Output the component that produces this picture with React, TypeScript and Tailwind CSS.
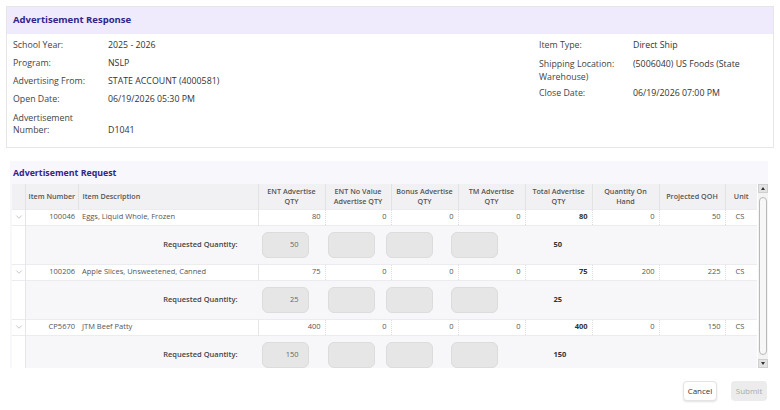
import { ChevronDown } from 'lucide-react';

type Item = {
    number: string;
    description: string;
    ent: number;
    entNoValue: number;
    bonus: number;
    tm: number;
    total: number;
    onHand: number;
    projected: number;
    unit: string;
    requested: number;
};

const items: Item[] = [
    { number: '100046', description: 'Eggs, Liquid Whole, Frozen', ent: 80, entNoValue: 0, bonus: 0, tm: 0, total: 80, onHand: 0, projected: 50, unit: 'CS', requested: 50 },
    { number: '100206', description: 'Apple Slices, Unsweetened, Canned', ent: 75, entNoValue: 0, bonus: 0, tm: 0, total: 75, onHand: 200, projected: 225, unit: 'CS', requested: 25 },
    { number: 'CP5670', description: 'JTM Beef Patty', ent: 400, entNoValue: 0, bonus: 0, tm: 0, total: 400, onHand: 0, projected: 150, unit: 'CS', requested: 150 },
];

const leftInfo: [string, string][] = [
    ['School Year:', '2025 - 2026'],
    ['Program:', 'NSLP'],
    ['Advertising From:', 'STATE ACCOUNT (4000581)'],
    ['Open Date:', '06/19/2026 05:30 PM'],
];

function QtyBox({ value }: { value?: number }) {
    return (
        <div className="w-[47px] h-[26px] rounded-[6px] bg-[#e6e6e6] border border-[#dcdcdc] flex items-center justify-end pr-[9px] text-[#666]">
            {value}
        </div>
    );
}

export default function App() {
    const font = { fontFamily: '"Open Sans", "Noto Sans", sans-serif' };
    return (
        <div className="w-[780px] h-[410px] bg-white text-[#333] pt-[6px]" style={font}>
            {/* Advertisement Response */}
            <div className="mx-[6px] border border-[#e6e6e6]">
                <div className="h-[27px] bg-[#efebfc] flex items-center px-[6px] text-[9.5px] font-bold text-[#33258a]">
                    Advertisement Response
                </div>
                <div className="flex px-[6px] pt-[3px] pb-[11px] text-[8.8px]">
                    <div className="w-[526px]">
                        {leftInfo.map(([label, value]) => (
                            <div key={label} className="flex h-[18px] items-center">
                                <span className="w-[95px] text-[#444]">{label}</span>
                                <span>{value}</span>
                            </div>
                        ))}
                        <div className="flex items-end leading-[12px] pt-[3px]">
                            <span className="w-[95px] text-[#444]">Advertisement<br />Number:</span>
                            <span>D1041</span>
                        </div>
                    </div>
                    <div className="flex-1">
                        <div className="flex h-[18px] items-center">
                            <span className="w-[94px] text-[#444]">Item Type:</span>
                            <span>Direct Ship</span>
                        </div>
                        <div className="leading-[13px] pt-[3px] h-[31px]">
                            <div className="flex">
                                <span className="w-[94px] text-[#444]">Shipping Location:</span>
                                <span>(5006040) US Foods (State</span>
                            </div>
                            <div className="text-[#444]">Warehouse)</div>
                        </div>
                        <div className="flex h-[16px] items-center">
                            <span className="w-[94px] text-[#444]">Close Date:</span>
                            <span>06/19/2026 07:00 PM</span>
                        </div>
                    </div>
                </div>
            </div>

            {/* Advertisement Request */}
            <div className="mt-[13px] mx-[10px] w-[758px] bg-[#f8f7fc] pl-[2px]">
                <div className="h-[23px] flex items-center pl-[1px] pt-[2px] text-[8.8px] font-bold text-[#33258a]">
                    Advertisement Request
                </div>
                <div className="flex gap-[1px] bg-white">
                    <div className="w-[745px] h-[184px] overflow-hidden">
                        <table className="table-fixed border-collapse w-[745px] text-[7.5px]">
                            <colgroup>
                                <col className="w-[13px]" />
                                <col className="w-[53px]" />
                                <col className="w-[180px]" />
                                <col className="w-[67px]" />
                                <col className="w-[66px]" />
                                <col className="w-[67px]" />
                                <col className="w-[67px]" />
                                <col className="w-[67px]" />
                                <col className="w-[67px]" />
                                <col className="w-[66px]" />
                                <col className="w-[32px]" />
                            </colgroup>
                            <thead>
                                <tr className="h-[25px] bg-[#f1f1f3] text-[#555] leading-[10px] text-[7.2px]">
                                    <th className="border-r border-[#e2e2e2]" />
                                    <th className="border-r border-[#e2e2e2] text-left pl-[3px] font-semibold whitespace-nowrap">Item Number</th>
                                    <th className="border-r border-[#e2e2e2] text-left pl-[4px] font-semibold">Item Description</th>
                                    <th className="border-r border-[#e2e2e2] font-semibold">ENT Advertise<br />QTY</th>
                                    <th className="border-r border-[#e2e2e2] font-semibold">ENT No Value<br />Advertise QTY</th>
                                    <th className="border-r border-[#e2e2e2] font-semibold">Bonus Advertise<br />QTY</th>
                                    <th className="border-r border-[#e2e2e2] font-semibold">TM Advertise<br />QTY</th>
                                    <th className="border-r border-[#e2e2e2] font-semibold">Total Advertise<br />QTY</th>
                                    <th className="border-r border-[#e2e2e2] font-semibold">Quantity On<br />Hand</th>
                                    <th className="border-r border-[#e2e2e2] font-semibold">Projected QOH</th>
                                    <th className="font-semibold">Unit</th>
                                </tr>
                            </thead>
                            <tbody>
                                {items.map((item) => (
                                    <>
                                        <tr key={item.number} className="h-[16px] bg-white border-t border-[#ececf0] text-[#555]">
                                            <td className="border-r border-[#e6e6ea] text-[#999]">
                                                <ChevronDown className="w-[10px] h-[10px] ml-[2px]" strokeWidth={1.3} />
                                            </td>
                                            <td className="text-right pr-[3px]">{item.number}</td>
                                            <td className="pl-[4px] border-r border-[#e6e6ea]">{item.description}</td>
                                            <td className="text-right pr-[4px] border-r border-dotted border-[#dcdce0]">{item.ent}</td>
                                            <td className="text-right pr-[4px] border-r border-dotted border-[#dcdce0]">{item.entNoValue}</td>
                                            <td className="text-right pr-[4px] border-r border-dotted border-[#dcdce0]">{item.bonus}</td>
                                            <td className="text-right pr-[4px] border-r border-dotted border-[#dcdce0]">{item.tm}</td>
                                            <td className="text-right pr-[4px] border-r border-dotted border-[#dcdce0] font-bold text-[#333]">{item.total}</td>
                                            <td className="text-right pr-[4px] border-r border-dotted border-[#dcdce0]">{item.onHand}</td>
                                            <td className="text-right pr-[4px] border-r border-dotted border-[#dcdce0]">{item.projected}</td>
                                            <td className="pl-[10px]">{item.unit}</td>
                                        </tr>
                                        <tr key={item.number + '-req'} className="h-[39px] border-t border-[#ececf0]">
                                            <td className="bg-white border-r border-[#e6e6ea]" />
                                            <td colSpan={10} className="bg-[#f7f7fa]">
                                                <div className="flex items-center">
                                                    <span className="w-[212px] text-right font-semibold text-[#444]">Requested Quantity:</span>
                                                    <div className="ml-[24px]"><QtyBox value={item.requested} /></div>
                                                    <div className="ml-[19px]"><QtyBox /></div>
                                                    <div className="ml-[11px]"><QtyBox /></div>
                                                    <div className="ml-[18px]"><QtyBox /></div>
                                                    <span className="ml-[56px] font-bold text-[#333]">{item.requested}</span>
                                                </div>
                                            </td>
                                        </tr>
                                    </>
                                ))}
                            </tbody>
                        </table>
                    </div>
                    {/* scrollbar */}
                    <div className="w-[10px] h-[184px] bg-[#f3f3f3] flex flex-col items-center">
                        <div className="w-[10px] h-[9px] bg-[#e3e3e3] border border-[#cfcfcf] flex items-center justify-center">
                            <div className="w-0 h-0 border-l-[2.5px] border-r-[2.5px] border-b-[3px] border-l-transparent border-r-transparent border-b-[#333]" />
                        </div>
                        <div className="flex-1 w-[8px] my-[4px] rounded-full border border-[#b9b9b9] bg-[#f7f7f7]" />
                        <div className="w-[10px] h-[9px] bg-[#e3e3e3] border border-[#cfcfcf] flex items-center justify-center">
                            <div className="w-0 h-0 border-l-[2.5px] border-r-[2.5px] border-t-[3px] border-l-transparent border-r-transparent border-t-[#333]" />
                        </div>
                    </div>
                </div>
            </div>

            {/* Actions */}
            <div className="flex justify-end gap-[14px] pr-[13px] mt-[13px] text-[8px]">
                <button className="w-[34px] h-[20px] rounded-[4px] bg-white border border-[#e4e4e4] shadow-[0_1px_2px_rgba(0,0,0,0.12)] text-[#333]">
                    Cancel
                </button>
                <button className="w-[36px] h-[20px] rounded-[4px] bg-[#ececec] text-[#aaa]">
                    Submit
                </button>
            </div>
        </div>
    );
}
